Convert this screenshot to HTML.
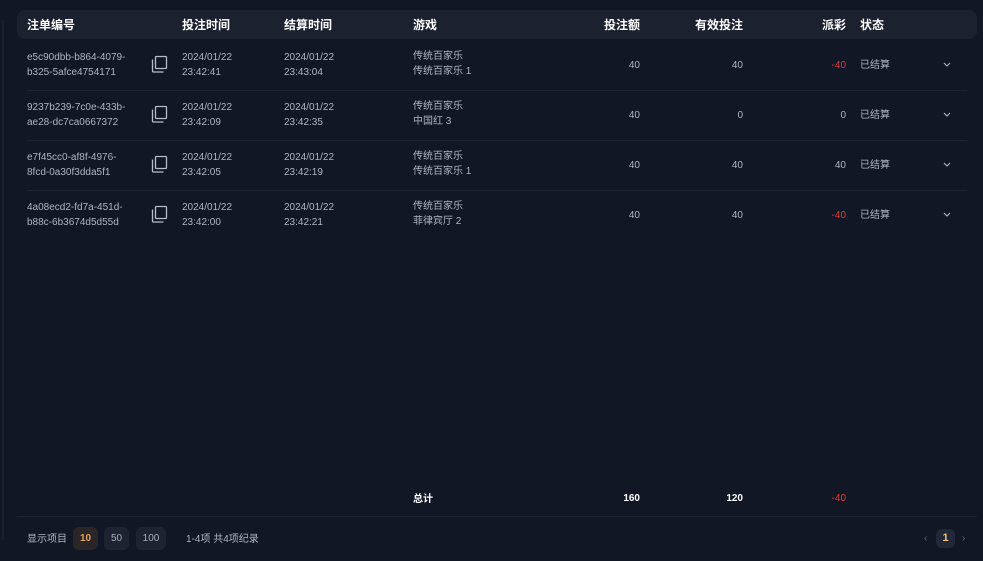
<!DOCTYPE html>
<html><head><meta charset="utf-8"><style>
body{margin:0;width:983px;height:561px;background:#121726;font-family:"Liberation Sans","Noto Sans CJK SC",sans-serif;color:#b0b4be;font-size:10px;position:relative;overflow:hidden}
.a{position:absolute;white-space:nowrap}
.hdr{position:absolute;left:17px;top:10px;width:960px;height:29px;background:#1c2130;border-radius:8px}
.h{font-weight:bold;color:#fff;font-size:12px;top:16px}
.r{text-align:right}
.line{position:absolute;left:27px;width:940px;height:1px;background:#1d2232}
.red{color:#e2363c}
.btn{position:absolute;top:527px;height:23px;border-radius:6px;background:#1e2332;color:#aab;text-align:center;line-height:23px;font-size:10px}
.cell{line-height:15px}
.st{top:56px}
</style></head><body>
<div class="a" style="left:2px;top:20px;width:2px;height:520px;background:#1a1f2d"></div>
<div class="hdr"></div>
<div class="a h" style="left:27px">注单编号</div>
<div class="a h" style="left:182px">投注时间</div>
<div class="a h" style="left:284px">结算时间</div>
<div class="a h" style="left:413px">游戏</div>
<div class="a h r" style="left:560px;width:80px">投注额</div>
<div class="a h r" style="left:663px;width:80px">有效投注</div>
<div class="a h r" style="left:766px;width:80px">派彩</div>
<div class="a h" style="left:860px">状态</div>

<div class="a cell" style="left:27px;top:50px">e5c90dbb-b864-4079-<br>b325-5afce4754171</div>
<div class="a cell" style="left:182px;top:50px">2024/01/22<br>23:42:41</div>
<div class="a cell" style="left:284px;top:50px">2024/01/22<br>23:43:04</div>
<div class="a cell" style="left:413px;top:49px">传统百家乐<br>传统百家乐 1</div>
<div class="a r" style="left:560px;width:80px;top:60px">40</div>
<div class="a r" style="left:663px;width:80px;top:60px">40</div>
<div class="a r red" style="left:766px;width:80px;top:60px">-40</div>
<div class="a" style="left:860px;top:56px">已结算</div>
<div class="line" style="top:90px"></div>

<div class="a cell" style="left:27px;top:100px">9237b239-7c0e-433b-<br>ae28-dc7ca0667372</div>
<div class="a cell" style="left:182px;top:100px">2024/01/22<br>23:42:09</div>
<div class="a cell" style="left:284px;top:100px">2024/01/22<br>23:42:35</div>
<div class="a cell" style="left:413px;top:99px">传统百家乐<br>中国红 3</div>
<div class="a r" style="left:560px;width:80px;top:110px">40</div>
<div class="a r" style="left:663px;width:80px;top:110px">0</div>
<div class="a r" style="left:766px;width:80px;top:110px">0</div>
<div class="a" style="left:860px;top:106px">已结算</div>
<div class="line" style="top:140px"></div>

<div class="a cell" style="left:27px;top:150px">e7f45cc0-af8f-4976-<br>8fcd-0a30f3dda5f1</div>
<div class="a cell" style="left:182px;top:150px">2024/01/22<br>23:42:05</div>
<div class="a cell" style="left:284px;top:150px">2024/01/22<br>23:42:19</div>
<div class="a cell" style="left:413px;top:149px">传统百家乐<br>传统百家乐 1</div>
<div class="a r" style="left:560px;width:80px;top:160px">40</div>
<div class="a r" style="left:663px;width:80px;top:160px">40</div>
<div class="a r" style="left:766px;width:80px;top:160px">40</div>
<div class="a" style="left:860px;top:156px">已结算</div>
<div class="line" style="top:190px"></div>

<div class="a cell" style="left:27px;top:200px">4a08ecd2-fd7a-451d-<br>b88c-6b3674d5d55d</div>
<div class="a cell" style="left:182px;top:200px">2024/01/22<br>23:42:00</div>
<div class="a cell" style="left:284px;top:200px">2024/01/22<br>23:42:21</div>
<div class="a cell" style="left:413px;top:199px">传统百家乐<br>菲律宾厅 2</div>
<div class="a r" style="left:560px;width:80px;top:210px">40</div>
<div class="a r" style="left:663px;width:80px;top:210px">40</div>
<div class="a r red" style="left:766px;width:80px;top:210px">-40</div>
<div class="a" style="left:860px;top:206px">已结算</div>

<svg class="a" style="left:0;top:0" width="983" height="240">
<g fill="none" stroke="#b8bcc6" stroke-width="1.3">
<g transform="translate(152,56)"><rect x="3.5" y="0.5" width="11" height="12" rx="1"/><path d="M0.5 3.5v11.5a1 1 0 0 0 1 1h10"/></g>
<g transform="translate(152,106)"><rect x="3.5" y="0.5" width="11" height="12" rx="1"/><path d="M0.5 3.5v11.5a1 1 0 0 0 1 1h10"/></g>
<g transform="translate(152,156)"><rect x="3.5" y="0.5" width="11" height="12" rx="1"/><path d="M0.5 3.5v11.5a1 1 0 0 0 1 1h10"/></g>
<g transform="translate(152,206)"><rect x="3.5" y="0.5" width="11" height="12" rx="1"/><path d="M0.5 3.5v11.5a1 1 0 0 0 1 1h10"/></g>
<path d="M944 63l3 3 3-3M944 113l3 3 3-3M944 163l3 3 3-3M944 213l3 3 3-3" stroke-width="1"/>
</g></svg>

<div class="a" style="left:413px;top:490px;color:#fff;font-weight:bold">总计</div>
<div class="a r" style="left:560px;width:80px;top:493px;color:#fff;font-weight:bold">160</div>
<div class="a r" style="left:663px;width:80px;top:493px;color:#fff;font-weight:bold">120</div>
<div class="a r red" style="left:766px;width:80px;top:493px">-40</div>
<div class="line" style="top:516px;left:17px;width:960px"></div>

<div class="a" style="left:27px;top:530px">显示项目</div>
<div class="btn" style="left:73px;width:25px;background:#2a2526;color:#e0a060;font-weight:bold">10</div>
<div class="btn" style="left:104px;width:25px">50</div>
<div class="btn" style="left:136px;width:30px">100</div>
<div class="a" style="left:186px;top:530px">1-4项 共4项纪录</div>
<div class="a" style="left:924px;top:533px;color:#667">‹</div>
<div class="btn" style="left:936px;width:19px;top:529px;height:19px;line-height:19px;background:#232839;color:#f0c070;font-weight:bold;font-size:11px">1</div>
<div class="a" style="left:962px;top:533px;color:#667">›</div>
</body></html>
